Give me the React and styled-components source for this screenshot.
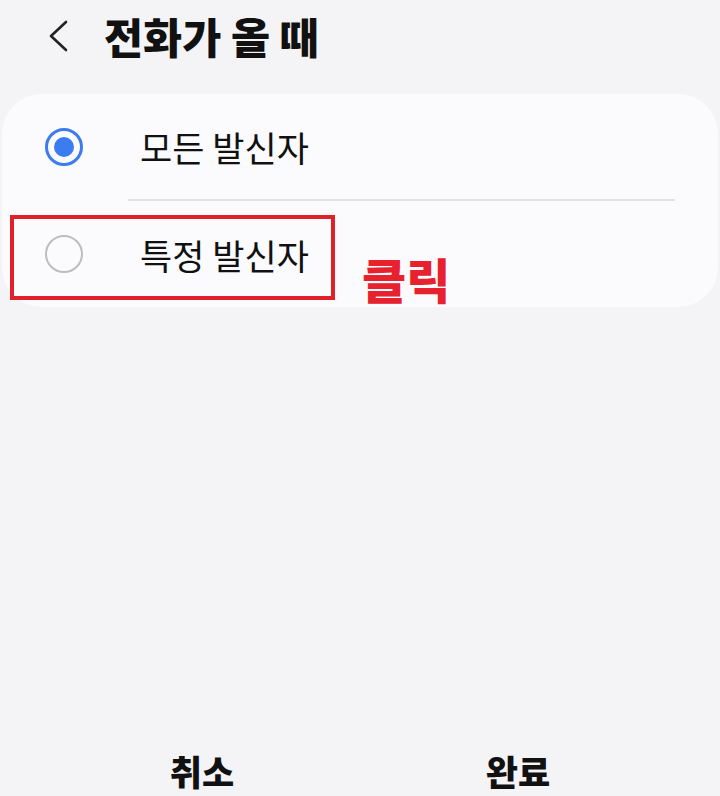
import React, { useState } from 'react';
import styled, { createGlobalStyle } from 'styled-components';

const GlobalStyle = createGlobalStyle`
    html, body {
        margin: 0;
        padding: 0;
        background: #f4f4f6;
    }
    body {
        font-family: "Noto Sans CJK KR", "Noto Sans", sans-serif;
    }
`;

const Page = styled.div`
    width: 720px;
    height: 796px;
    display: flex;
    flex-direction: column;
    background: #f4f4f6;
    overflow: hidden;
`;

const Header = styled.div`
    height: 72px;
    display: flex;
    align-items: center;
    padding-left: 45px;
`;

const BackButton = styled.div`
    width: 26px;
    height: 34px;
    display: flex;
    align-items: center;
    justify-content: center;
    margin-right: 33px;
    cursor: pointer;
`;

const Title = styled.h1`
    margin: 0;
    font-size: 42.5px;
    font-weight: 800;
    color: #111;
    line-height: 1;
`;

const Card = styled.div`
    margin: 22px 2px 0;
    background: #fbfbfd;
    border-radius: 40px;
    display: flex;
    flex-direction: column;
`;

const Row = styled.div`
    position: relative;
    height: ${(p) => p.$height}px;
    display: flex;
    align-items: center;
    padding-left: 43px;
    cursor: pointer;
`;

const Radio = styled.div`
    width: 38px;
    height: 38px;
    box-sizing: border-box;
    border-radius: 50%;
    border: ${(p) => (p.$checked ? '3.5px solid #3d7bf0' : '2.5px solid #bdbdbd')};
    display: flex;
    align-items: center;
    justify-content: center;
    margin-right: 57px;

    &::after {
        content: '';
        display: ${(p) => (p.$checked ? 'block' : 'none')};
        width: 20px;
        height: 20px;
        border-radius: 50%;
        background: #3d7bf0;
    }
`;

const Label = styled.span`
    font-size: 35px;
    color: #111;
    line-height: 1;
`;

const Divider = styled.div`
    height: 2px;
    background: #e3e3e5;
    margin: 0 43px 0 126px;
`;

const Highlight = styled.div`
    position: absolute;
    left: 8px;
    top: 14px;
    width: 325px;
    height: 85px;
    box-sizing: border-box;
    border: 4px solid #e0202b;
    pointer-events: none;
`;

const Annotation = styled.span`
    position: absolute;
    left: 360px;
    top: 53px;
    font-size: 48px;
    line-height: 48px;
    font-weight: 900;
    color: #e8212e;
`;

const Spacer = styled.div`
    flex: 1;
`;

const Footer = styled.div`
    display: flex;
    padding: 0 44px;
    height: 50px;
`;

const FooterButton = styled.div`
    flex: 1;
    display: flex;
    justify-content: center;
    font-size: 35px;
    font-weight: 800;
    color: #111;
    line-height: 1;
    padding-top: 7px;
    cursor: pointer;
`;

const options = ['모든 발신자', '특정 발신자'];

const App = () => {
    const [selected, setSelected] = useState(0);

    return (
        <>
            <GlobalStyle />
            <Page>
                <Header>
                    <BackButton>
                        <svg width="24" height="34" viewBox="0 0 24 34">
                            <path d="M20 3 L5 17 L20 31" fill="none" stroke="#222" strokeWidth="2.6" strokeLinecap="round" strokeLinejoin="round" />
                        </svg>
                    </BackButton>
                    <Title>전화가 올 때</Title>
                </Header>
                <Card>
                    <Row $height={105} onClick={() => setSelected(0)}>
                        <Radio $checked={selected === 0} />
                        <Label>{options[0]}</Label>
                    </Row>
                    <Divider />
                    <Row $height={106} onClick={() => setSelected(1)}>
                        <Radio $checked={selected === 1} />
                        <Label>{options[1]}</Label>
                        <Highlight />
                        <Annotation>클릭</Annotation>
                    </Row>
                </Card>
                <Spacer />
                <Footer>
                    <FooterButton>취소</FooterButton>
                    <FooterButton>완료</FooterButton>
                </Footer>
            </Page>
        </>
    );
};

export default App;
